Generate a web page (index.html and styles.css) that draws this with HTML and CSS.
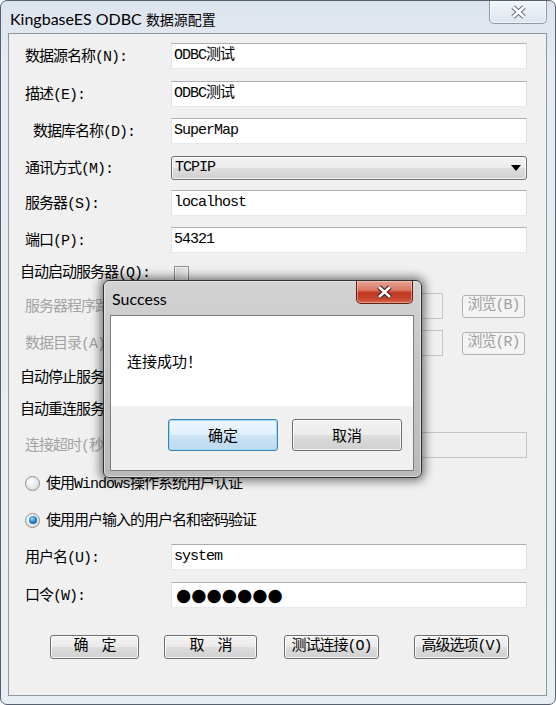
FILE: index.html
```html
<!DOCTYPE html>
<html lang="zh-CN">
<head>
<meta charset="utf-8">
<title>KingbaseES ODBC 数据源配置</title>
<link rel="stylesheet" href="styles.css">
</head>
<body>
<div class="window">
  <div class="titlebar">
    <div class="title">KingbaseES ODBC <span class="title-cjk">数据源配置</span></div>
    <div class="win-close">
      <svg width="17" height="14" viewBox="0 0 17 14"><path d="M3 2 L14 12 M14 2 L3 12" stroke="#6c7784" stroke-width="5"/><path d="M3 2 L14 12 M14 2 L3 12" stroke="#ffffff" stroke-width="2.6"/></svg>
    </div>
  </div>
  <div class="client">
    <div class="form">
      <div class="row"><span class="lbl">数据源名称(N):</span><div class="field">ODBC测试</div></div>
      <div class="row"><span class="lbl">描述(E):</span><div class="field">ODBC测试</div></div>
      <div class="row deep"><span class="lbl">数据库名称(D):</span><div class="field">SuperMap</div></div>
      <div class="row"><span class="lbl">通讯方式(M):</span><div class="select"><span>TCPIP</span><svg width="10" height="6" viewBox="0 0 10 6"><path d="M0 0 H10 L5 6 Z" fill="#000"/></svg></div></div>
      <div class="row"><span class="lbl">服务器(S):</span><div class="field">localhost</div></div>
      <div class="row"><span class="lbl">端口(P):</span><div class="field">54321</div></div>
      <div class="row chk"><span class="lbl">自动启动服务器(Q):</span><span class="check"></span></div>
      <div class="row"><span class="lbl off">服务器程序路径(B):</span><div class="field short off"></div><div class="browse">浏览(B)</div></div>
      <div class="row"><span class="lbl off">数据目录(A):</span><div class="field short off"></div><div class="browse">浏览(R)</div></div>
      <div class="row chk"><span class="lbl">自动停止服务器(T):</span><span class="check"></span></div>
      <div class="row chk"><span class="lbl">自动重连服务器(C):</span><span class="check"></span></div>
      <div class="row"><span class="lbl off">连接超时(秒):</span><div class="field off"></div></div>
      <div class="row"><span class="radio"></span><span class="radio-text">使用Windows操作系统用户认证</span></div>
      <div class="row"><span class="radio on"></span><span class="radio-text">使用用户输入的用户名和密码验证</span></div>
      <div class="row"><span class="lbl">用户名(U):</span><div class="field">system</div></div>
      <div class="row"><span class="lbl">口令(W):</span><div class="field pw">●●●●●●●</div></div>
      <div class="buttons">
        <div class="btn b-ok">确　定</div>
        <div class="btn b-cancel">取　消</div>
        <div class="btn b-test">测试连接(O)</div>
        <div class="btn b-adv">高级选项(V)</div>
      </div>
    </div>
  </div>

  <div class="msgbox">
    <div class="msg-titlebar">
      <div class="msg-title">Success</div>
      <div class="msg-close">
        <svg width="17" height="14" viewBox="0 0 17 14"><path d="M3 2 L14 12 M14 2 L3 12" stroke="#4a1a12" stroke-width="5"/><path d="M3 2 L14 12 M14 2 L3 12" stroke="#ffffff" stroke-width="2.6"/></svg>
      </div>
    </div>
    <div class="msg-client">
      <div class="msg-body">连接成功！</div>
      <div class="msg-actions">
        <div class="mbtn default">确定</div>
        <div class="mbtn">取消</div>
      </div>
    </div>
  </div>
</div>
</body>
</html>
```
FILE: styles.css
```css
* { box-sizing: border-box; }
html, body { margin: 0; padding: 0; }
body {
  width: 556px;
  height: 705px;
  overflow: hidden;
  background: #ffffff;
}

.window {
  position: relative;
  width: 556px;
  height: 705px;
  border: 1px solid #56616c;
  border-radius: 7px;
  background: linear-gradient(#dce4ed, #e5ebf2 60px, #e9eef4);
  padding: 0 8px 8px 7px;
  display: flex;
  flex-direction: column;
}

.titlebar {
  height: 32px;
  flex: none;
  display: flex;
  justify-content: space-between;
  align-items: flex-start;
}
.title {
  font-family: Lato, "Noto Sans CJK SC", sans-serif;
  font-size: 16px;
  line-height: 20px;
  margin-top: 8px;
  margin-left: 2px;
  color: #000;
}
.title-cjk { font-family: "Noto Sans CJK SC", sans-serif; font-size: 14px; }
.win-close {
  width: 58px;
  height: 23px;
  border: 1px solid #8d99a6;
  border-top: none;
  border-radius: 0 0 5px 5px;
  background: linear-gradient(#f1f5f8, #dde5ed);
  box-shadow: inset 0 0 0 1px rgba(255,255,255,0.6);
  display: flex;
  align-items: center;
  justify-content: center;
}

.client {
  flex: 1;
  border: 1px solid #8e99a4;
  background: #f0f0f0;
  font-family: "Liberation Mono", "Noto Sans CJK SC", monospace;
  font-size: 15px;
  letter-spacing: -1px;
  color: #000;
}

.form {
  display: grid;
  grid-template-rows: 38px 37px 37px 35px 37px 33px 33px 37px 35px 32px 35px 38px 37px 37px 38px 53px 24px;
  padding-top: 9px;
}

.row {
  display: flex;
  align-items: center;
  height: 26px;
  padding-left: 16px;
}
.lbl { width: 146px; flex: none; white-space: nowrap; line-height: 20px; padding-top: 4px; }
.lbl.off { color: #a3a3a3; }
.row.deep { padding-left: 24px; }
.row.deep .lbl { width: 138px; }
.row.chk { padding-left: 11px; }
.row.chk .lbl { width: 154px; padding-top: 2px; }

.field {
  width: 356px;
  height: 26px;
  border: 1px solid;
  border-color: #abadb3 #dbdfe6 #e3e9ef #e2e3ea;
  background: #ffffff;
  padding-left: 2px;
  line-height: 24px;
  white-space: nowrap;
}
.field.short { width: 272px; }
.field.off {
  background: #f0f0f0;
  border-color: #c3c5c8;
}
.field.pw {
  font-family: "DejaVu Sans", sans-serif;
  font-size: 17.5px;
  letter-spacing: 0;
  padding-left: 4px;
}

.select {
  width: 356px;
  height: 24px;
  border: 1px solid #707070;
  border-radius: 3px;
  background: linear-gradient(#f3f3f3 0%, #ebebeb 50%, #dddddd 51%, #d0d0d0 100%);
  box-shadow: inset 0 0 0 1px rgba(255,255,255,0.7);
  display: flex;
  align-items: center;
  justify-content: space-between;
  padding: 0 5px 0 3px;
  line-height: 20px;
}

.browse {
  width: 63px;
  height: 23px;
  margin-left: 19px;
  border: 1px solid #adb2b5;
  border-radius: 3px;
  background: #f4f4f4;
  color: #a0a0a0;
  display: flex;
  align-items: center;
  justify-content: center;
  line-height: 20px;
}

.check {
  width: 15px;
  height: 15px;
  border: 1px solid #8e8f8f;
  background: linear-gradient(135deg, #d6d6d6, #f8f8f8);
  box-shadow: inset 0 0 0 1px #f3f3f3;
}

.radio {
  width: 15px;
  height: 15px;
  border-radius: 50%;
  border: 1px solid #8e8f8f;
  background: radial-gradient(circle at 40% 35%, #ffffff, #d2d2d2);
  display: flex;
  align-items: center;
  justify-content: center;
  flex: none;
}
.radio.on::before {
  content: "";
  width: 8px;
  height: 8px;
  border-radius: 50%;
  background: radial-gradient(circle at 40% 35%, #9ad8ff, #1b76c4 55%, #0b4a86);
}
.radio-text { margin-left: 6px; line-height: 20px; white-space: nowrap; padding-top: 3px; }

.buttons {
  display: flex;
  align-items: flex-start;
  padding-left: 41px;
}
.btn {
  height: 24px;
  border: 1px solid #707070;
  border-radius: 3px;
  background: linear-gradient(#f3f3f3 0%, #ebebeb 50%, #dddddd 51%, #d0d0d0 100%);
  box-shadow: inset 0 0 0 1px rgba(255,255,255,0.75);
  display: flex;
  align-items: center;
  justify-content: center;
  line-height: 20px;
  white-space: nowrap;
}
.b-ok { width: 89px; }
.b-cancel { width: 93px; margin-left: 25px; }
.b-test { width: 95px; margin-left: 27px; }
.b-adv { width: 95px; margin-left: 35px; }

/* Message box */
.msgbox {
  position: absolute;
  left: 102px;
  top: 279px;
  width: 319px;
  height: 198px;
  border: 1px solid #2e3236;
  border-radius: 6px;
  background: linear-gradient(#d3d3d3, #c6c6c6 40%, #bababa);
  box-shadow: 0 0 10px 3px rgba(0,0,0,0.5), inset 0 0 0 1px rgba(255,255,255,0.45);
  padding: 0 7px 6px 6px;
  display: flex;
  flex-direction: column;
}
.msg-titlebar {
  height: 34px;
  flex: none;
  display: flex;
  justify-content: space-between;
  align-items: flex-start;
}
.msg-title {
  font-family: Lato, "Noto Sans", sans-serif;
  font-size: 16px;
  line-height: 20px;
  margin-top: 8px;
  margin-left: 2px;
  color: #000;
}
.msg-close {
  width: 57px;
  height: 23px;
  margin-right: 1px;
  border: 1px solid #5e2219;
  border-top: none;
  border-radius: 0 0 5px 5px;
  background: linear-gradient(#e9a494 0%, #d87663 42%, #c23b22 52%, #c4412a 78%, #d9664c 100%);
  box-shadow: inset 0 0 0 1px rgba(255,220,210,0.45);
  display: flex;
  align-items: center;
  justify-content: center;
}
.msg-client {
  flex: 1;
  border: 1px solid #7d7d7d;
  display: flex;
  flex-direction: column;
  font-family: "Noto Sans CJK SC", sans-serif;
  font-size: 15px;
  color: #000;
}
.msg-body {
  height: 90px;
  flex: none;
  background: #ffffff;
  display: flex;
  align-items: center;
  padding-left: 16px;
  line-height: 20px;
}
.msg-actions {
  flex: 1;
  background: #f0f0f0;
  display: flex;
  justify-content: flex-end;
  align-items: flex-start;
  gap: 14px;
  padding: 13px 11px 0 0;
}
.mbtn {
  width: 110px;
  height: 32px;
  border: 1px solid #707070;
  border-radius: 3px;
  background: linear-gradient(#f3f3f3 0%, #ebebeb 50%, #dddddd 51%, #d0d0d0 100%);
  box-shadow: inset 0 0 0 1px rgba(255,255,255,0.75);
  display: flex;
  align-items: center;
  justify-content: center;
  line-height: 20px;
}
.mbtn.default {
  border-color: #3c7fb1;
  background: linear-gradient(#eef7fd 0%, #e0f0fb 50%, #cce4f5 51%, #bcd9ee 100%);
  box-shadow: inset 0 0 0 1px #9edcf8;
}
```
